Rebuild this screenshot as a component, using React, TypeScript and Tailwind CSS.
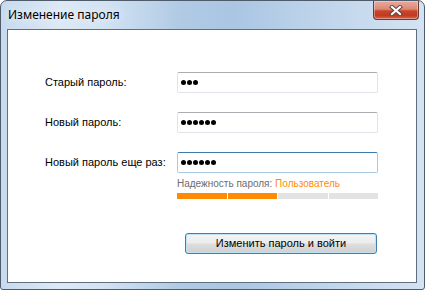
import React from 'react';

const titleFont = { fontFamily: '"Noto Sans", "Open Sans", sans-serif' };
const bodyFont = { fontFamily: '"Liberation Sans", Arial, sans-serif' };

function CloseButton() {
  return (
    <button
      aria-label="Закрыть"
      className="flex h-[19px] w-[46px] items-center justify-center rounded-b-[4px] border border-t-0 border-[#6b3a36] bg-[linear-gradient(to_bottom,#e9a99b_0%,#dd8a76_45%,#c8452b_55%,#c23a20_80%,#d2664b_100%)] shadow-[inset_0_0_0_1px_rgba(255,255,255,0.35)]"
    >
      <svg width="14" height="11" viewBox="0 0 14 11">
        <path d="M3 2 L11 9 M11 2 L3 9" stroke="#5a4040" strokeWidth="4" strokeLinecap="square" />
        <path d="M3 2 L11 9 M11 2 L3 9" stroke="#ffffff" strokeWidth="2.2" strokeLinecap="square" />
      </svg>
    </button>
  );
}

function PasswordField({ length, focused }: { length: number; focused?: boolean }) {
  return (
    <div
      role="textbox"
      aria-label="password"
      className={`flex h-[21px] w-[201px] items-center gap-[1px] rounded-[2px] border bg-white pl-[3px] ${
        focused
          ? 'border-[#a9c9e6] border-t-[#3d7bad]'
          : 'border-[#e0e4ea] border-t-[#abadb3]'
      }`}
    >
      {Array.from({ length }).map((_, i) => (
        <span key={i} className="h-[5px] w-[5px] rounded-full bg-black" />
      ))}
    </div>
  );
}

export default function App() {
  const rows = [
    { label: 'Старый пароль:', length: 3 },
    { label: 'Новый пароль:', length: 6 },
    { label: 'Новый пароль еще раз:', length: 6, focused: true },
  ];

  return (
    <div
      className="flex h-[290px] w-[425px] flex-col overflow-hidden rounded-t-[7px] rounded-b-[3px] border border-[#4d5b6b] bg-[linear-gradient(to_right,#c7daee_0%,#dde9f5_14%,#d3e3f3_24%,#b1cbe5_42%,#aac6e3_55%,#c1d6ec_78%,#d4e3f2_100%)]"
      style={bodyFont}
    >
      <div className="flex h-[28px] shrink-0 items-start justify-between pl-[7px] pr-[5px]">
        <span
          className="mt-[6px] text-[12px] leading-[16px] text-black [text-shadow:0_0_8px_#ffffff]"
          style={titleFont}
        >
          Изменение пароля
        </span>
        <CloseButton />
      </div>

      <div className="ml-[6px] flex h-[254px] w-[410px] flex-col border border-[#5f6f81] bg-white pl-[37px] pt-[42px]">
        <div className="grid grid-cols-[132px_201px] gap-y-[19px]">
          {rows.map(r => (
            <React.Fragment key={r.label}>
              <span className="flex items-center whitespace-nowrap text-[11px] text-black">{r.label}</span>
              <PasswordField length={r.length} focused={r.focused} />
            </React.Fragment>
          ))}
        </div>

        <div className="ml-[132px] w-[201px]">
          <div className="mt-[5px] whitespace-nowrap text-[10px] leading-[12px] text-[#6d6d6d]">
            Надежность пароля: <span className="text-[#ff8c00]">Пользователь</span>
          </div>
          <div className="mt-[3px] grid h-[6px] grid-cols-4 gap-[1px]">
            <div className="bg-[#ff8c00]" />
            <div className="bg-[#ff8c00]" />
            <div className="bg-[#e3e3e3]" />
            <div className="bg-[#e3e3e3]" />
          </div>
          <button className="ml-[8px] mt-[34px] h-[21px] w-[192px] rounded-[3px] border border-[#3c7fb1] bg-[linear-gradient(to_bottom,#f4f4f4_0%,#ececec_48%,#dedede_52%,#d0d0d0_100%)] text-[11px] text-black shadow-[inset_0_0_0_1px_#bfe4f7]">
            Изменить пароль и войти
          </button>
        </div>
      </div>
    </div>
  );
}
